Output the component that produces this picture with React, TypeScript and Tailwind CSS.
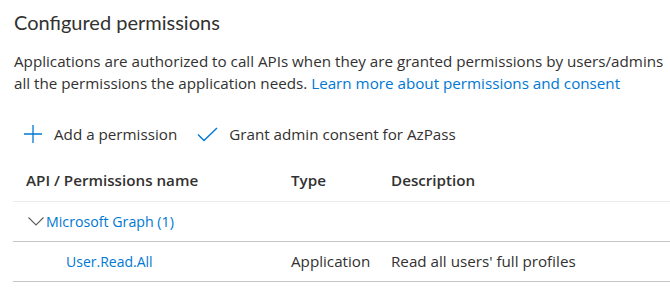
import React from 'react';

const body = { fontFamily: '"Open Sans", "Noto Sans", sans-serif' };
const title = { fontFamily: 'Lato, "Open Sans", sans-serif' };

const PlusIcon = () => (
  <svg width="20" height="20" viewBox="0 0 20 20" className="shrink-0">
    <path d="M10 1v18M1 10h18" stroke="#0078d4" strokeWidth="1.3" fill="none" />
  </svg>
);

const CheckIcon = () => (
  <svg width="21" height="15" viewBox="0 0 21 15" className="shrink-0">
    <path d="M1 7.5l6 6L20 1" stroke="#0078d4" strokeWidth="1.4" fill="none" />
  </svg>
);

const Chevron = () => (
  <svg width="16" height="9" viewBox="0 0 16 9" className="shrink-0">
    <path d="M0.5 0.5l7.5 7.5 7.5-7.5" stroke="#605e5c" strokeWidth="1.1" fill="none" />
  </svg>
);

const App: React.FC = () => {
  return (
    <div className="w-[670px] h-[295px] overflow-hidden bg-white text-[#323130]" style={body}>
      <div className="pl-[14px] pt-[8px]">
        <h1 className="text-[20px] leading-[28px] font-normal" style={title}>Configured permissions</h1>
        <p className="mt-[14px] text-[15.2px] leading-[22px] whitespace-nowrap">
          Applications are authorized to call APIs when they are granted permissions by users/admins
          <br />
          all the permissions the application needs.{' '}
          <a className="text-[#0078d4]">Learn more about permissions and consent</a>
        </p>
      </div>

      <div className="flex items-center h-[40px] mt-[20px] pl-[23px] text-[15.2px]">
        <PlusIcon />
        <span className="ml-[11px]">Add a permission</span>
        <span className="ml-[20px]"><CheckIcon /></span>
        <span className="ml-[11px]">Grant admin consent for AzPass</span>
      </div>

      <div className="ml-[13px] mt-[6px] text-[15.2px]">
        <div className="grid grid-cols-[278px_100px_1fr] h-[42px] items-center border-b border-[#edebe9] font-semibold">
          <div className="pl-[13px]">API / Permissions name</div>
          <div>Type</div>
          <div>Description</div>
        </div>
        <div className="flex items-center h-[40px] border-b border-[#c8c6c4] pl-[15px] text-[#0078d4]">
          <Chevron />
          <span className="ml-[2px] text-[14.2px]">Microsoft Graph (1)</span>
        </div>
        <div className="grid grid-cols-[278px_100px_1fr] h-[40px] items-center border-b border-[#c8c6c4]">
          <div className="pl-[53px] text-[14px] text-[#0078d4]">User.Read.All</div>
          <div>Application</div>
          <div>Read all users' full profiles</div>
        </div>
      </div>
    </div>
  );
};

export default App;
